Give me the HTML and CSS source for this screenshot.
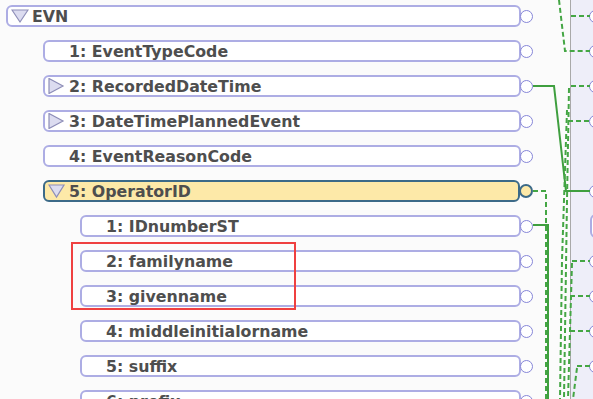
FILE: index.html
```html
<!DOCTYPE html>
<html lang="en">
<head>
  <meta charset="UTF-8">
  <title>EVN mapping</title>
  <link rel="stylesheet" href="styles.css">
</head>
<body>
  <div class="canvas">
    <div class="tree">
      <div class="row lvl0">
        <div class="node"><svg class="tog" viewBox="0 0 18 16"><polygon points="1,2 17,2 9,14"/></svg><span>EVN</span></div>
        <span class="port"></span>
      </div>
      <div class="row lvl1">
        <div class="node"><span class="tog"></span><span>1: EventTypeCode</span></div>
        <span class="port"></span>
      </div>
      <div class="row lvl1">
        <div class="node"><svg class="tog" viewBox="0 0 18 16"><polygon points="1,0.5 1,15.5 15,8"/></svg><span>2: RecordedDateTime</span></div>
        <span class="port"></span>
      </div>
      <div class="row lvl1">
        <div class="node"><svg class="tog" viewBox="0 0 18 16"><polygon points="1,0.5 1,15.5 15,8"/></svg><span>3: DateTimePlannedEvent</span></div>
        <span class="port"></span>
      </div>
      <div class="row lvl1">
        <div class="node"><span class="tog"></span><span>4: EventReasonCode</span></div>
        <span class="port"></span>
      </div>
      <div class="row lvl1 sel">
        <div class="node"><svg class="tog" viewBox="0 0 18 16"><polygon points="1,2 16,2 8.5,14"/></svg><span>5: OperatorID</span></div>
        <span class="port"></span>
      </div>
      <div class="row lvl2">
        <div class="node"><span class="tog"></span><span>1: IDnumberST</span></div>
        <span class="port"></span>
      </div>
      <div class="row lvl2">
        <div class="node"><span class="tog"></span><span>2: familyname</span></div>
        <span class="port"></span>
      </div>
      <div class="row lvl2">
        <div class="node"><span class="tog"></span><span>3: givenname</span></div>
        <span class="port"></span>
      </div>
      <div class="row lvl2">
        <div class="node"><span class="tog"></span><span>4: middleinitialorname</span></div>
        <span class="port"></span>
      </div>
      <div class="row lvl2">
        <div class="node"><span class="tog"></span><span>5: suffix</span></div>
        <span class="port"></span>
      </div>
      <div class="row lvl2">
        <div class="node"><span class="tog"></span><span>6: prefix</span></div>
        <span class="port"></span>
      </div>
    </div>

    <div class="target">
      <div class="trow"><span class="port"></span></div>
      <div class="trow"><span class="port"></span></div>
      <div class="trow"><span class="port"></span></div>
      <div class="trow"><span class="port"></span></div>
      <div class="trow"></div>
      <div class="trow"><span class="port"></span></div>
      <div class="trow"><span class="tbox"></span></div>
      <div class="trow"><span class="port"></span></div>
      <div class="trow"><span class="port"></span></div>
      <div class="trow"><span class="port"></span></div>
      <div class="trow"><span class="port"></span></div>
    </div>

    <!-- mapping lines drawn over both panes -->
    <svg class="links" viewBox="0 0 593 399">
      <g class="solid">
        <path d="M533 86 H554 L566 191 H590"/>
        <path d="M533 225 H548 V399"/>
      </g>
      <g class="dash">
        <path d="M559 0 L565 51 H590"/>
        <path d="M571 16 H590"/>
        <path d="M571 86 H590"/>
        <path d="M568 121 H590"/>
        <path d="M569 88 L567 200 L564 399"/>
        <path d="M567 110 L562 260 L560 399"/>
        <path d="M533 191 H546 V399"/>
        <path d="M572 261 H590"/>
        <path d="M572 263 L568 399"/>
        <path d="M570 296 H590"/>
        <path d="M570 331 H590"/>
        <path d="M577 366 H590"/>
        <path d="M577 368 L573 399"/>
      </g>
    </svg>

    <div class="mark"></div>
  </div>
</body>
</html>
```

FILE: styles.css
```css
* { box-sizing: border-box; margin: 0; padding: 0; }
body {
  background-color: #fbfbfb;
  font-family: "DejaVu Sans", Verdana, sans-serif;
  overflow: hidden;
}
.canvas {
  position: relative;
  display: flex;
  width: 593px;
  height: 399px;
  overflow: hidden;
}
.tree {
  width: 570px;
  flex: none;
  padding-top: 5px;
}
.row {
  display: flex;
  align-items: center;
  height: 22px;
  margin-bottom: 13px;
  padding-right: 37px;
}
.lvl0 { padding-left: 6px; }
.lvl1 { padding-left: 43px; }
.lvl2 { padding-left: 80px; }
.node {
  flex: 1;
  display: flex;
  align-items: center;
  height: 22px;
  padding-left: 3px;
  background-color: #ffffff;
  border: 2px solid #adade4;
  border-radius: 6px;
  color: #4e4e4e;
  font-weight: bold;
  font-size: 15.8px;
  white-space: nowrap;
  overflow: hidden;
}
.tog {
  flex: none;
  width: 18px;
  height: 16px;
  margin-right: 3px;
}
.tog polygon {
  fill: #dcdcf0;
  stroke: #8e8eb8;
  stroke-width: 1.2;
}
.port {
  flex: none;
  width: 13px;
  height: 13px;
  border: 1.5px solid #8686d8;
  border-radius: 50%;
  background-color: #ffffff;
  margin-left: -1px;
}
.sel .node {
  background-color: #fde9a8;
  border: 2.5px solid #3c6a88;
}
.sel .port {
  width: 14px;
  height: 14px;
  border: 2.5px solid #3c6a88;
  background-color: #fde9a8;
}
.target {
  flex: 1;
  padding-top: 5px;
  background-color: #eeeef9;
  border-left: 1px solid #a9a9a9;
}
.trow {
  display: flex;
  align-items: center;
  height: 22px;
  margin-bottom: 13px;
  padding-left: 19px;
}
.tbox {
  width: 30px;
  height: 24px;
  border: 2px solid #adade4;
  border-radius: 6px;
  background-color: #ffffff;
}
.links {
  position: absolute;
  top: 0;
  left: 0;
  width: 593px;
  height: 399px;
  pointer-events: none;
}
.links path {
  fill: none;
  stroke: #3f9f3f;
  stroke-width: 2;
}
.links .dash path {
  stroke: #44a644;
  stroke-dasharray: 5 3;
}
.mark {
  position: absolute;
  left: 71px;
  top: 242px;
  width: 225px;
  height: 68px;
  border: 2.5px solid #ef4040;
}
```
